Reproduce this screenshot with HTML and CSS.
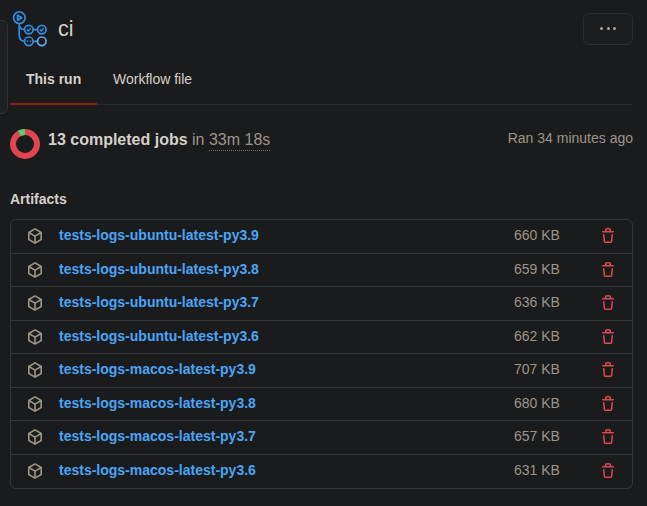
FILE: index.html
```html
<!DOCTYPE html>
<html lang="en">
<head>
<meta charset="utf-8">
<title>ci</title>
<link rel="stylesheet" href="styles.css">
</head>
<body>
<svg class="defs" width="0" height="0">
  <symbol id="package" viewBox="0 0 16 16"><path fill="none" stroke="currentColor" stroke-width="1.6" stroke-linejoin="round" d="M8 .9 14.2 4.5v7L8 15.1 1.8 11.5v-7zM1.8 4.5 8 8.1l6.2-3.6M8 8.1v7"/></symbol>
  <symbol id="trash" viewBox="0 0 16 16"><path fill="currentColor" fill-rule="evenodd" d="M6.5 1.75a.25.25 0 01.25-.25h2.5a.25.25 0 01.25.25V3h-3V1.75zm4.5 0V3h2.25a.75.75 0 010 1.5H2.75a.75.75 0 010-1.5H5V1.75C5 .784 5.784 0 6.75 0h2.5C10.216 0 11 .784 11 1.75zM4.496 6.675a.75.75 0 10-1.492.15l.66 6.6A1.75 1.75 0 005.405 15h5.19c.9 0 1.652-.681 1.741-1.576l.66-6.6a.75.75 0 00-1.492-.149l-.66 6.6a.25.25 0 01-.249.225h-5.19a.25.25 0 01-.249-.225l-.66-6.6z"/></symbol>
</svg>
<div class="side-panel"></div>
<main class="page">
  <header class="header">
    <svg class="logo" width="36" height="38" viewBox="0 0 36 38" fill="none" stroke="#318de2" stroke-width="1.7">
      <circle cx="7.3" cy="7.7" r="5.8"/>
      <path d="M5.6 5.1v5.2l4-2.6z" stroke-linejoin="round"/>
      <path d="M7.2 13.5v10.8q0 7 5.3 7M7.2 14.5q.4 5 5.3 5M21.1 19.6h4.4M21.1 31.3h4.4"/>
      <circle cx="16.8" cy="19.6" r="4.3"/>
      <circle cx="29.8" cy="19.6" r="4.3"/>
      <circle cx="16.8" cy="31.3" r="4.3"/>
      <circle cx="29.8" cy="31.3" r="4.3" stroke="#66acef"/>
      <path stroke-width="1.5" d="m14.8 19.6 1.4 1.4 2.7-2.7M27.8 19.6l1.4 1.4 2.7-2.7M14.7 31.3h1.5M17.6 31.3h1.5"/>
    </svg>
    <h1 class="title">ci</h1>
    <button class="more" aria-label="More"><i></i><i></i><i></i></button>
  </header>
  <nav class="tabs">
    <a class="tab active">This run</a>
    <a class="tab">Workflow file</a>
  </nav>
  <section class="summary">
    <svg class="donut" width="30" height="30" viewBox="0 0 30 30" fill="none" stroke-width="6">
      <circle cx="15" cy="15" r="12" stroke="#df4650"/>
      <path stroke="#4fd56a" d="M9.4 4.4A12 12 0 0 1 15 3"/>
      <path stroke="#b83942" stroke-width=".6" d="m5 25 3.8-3.8"/>
    </svg>
    <p class="jobs"><strong>13 completed jobs</strong> <span>in</span> <span class="duration">33m 18s</span></p>
    <p class="ran">Ran 34 minutes ago</p>
  </section>
  <h2 class="heading">Artifacts</h2>
  <ul class="artifacts">
    <li><svg class="package"><use href="#package"/></svg><a>tests-logs-ubuntu-latest-py3.9</a><span class="size">660 KB</span><svg class="trash"><use href="#trash"/></svg></li>
    <li><svg class="package"><use href="#package"/></svg><a>tests-logs-ubuntu-latest-py3.8</a><span class="size">659 KB</span><svg class="trash"><use href="#trash"/></svg></li>
    <li><svg class="package"><use href="#package"/></svg><a>tests-logs-ubuntu-latest-py3.7</a><span class="size">636 KB</span><svg class="trash"><use href="#trash"/></svg></li>
    <li><svg class="package"><use href="#package"/></svg><a>tests-logs-ubuntu-latest-py3.6</a><span class="size">662 KB</span><svg class="trash"><use href="#trash"/></svg></li>
    <li><svg class="package"><use href="#package"/></svg><a>tests-logs-macos-latest-py3.9</a><span class="size">707 KB</span><svg class="trash"><use href="#trash"/></svg></li>
    <li><svg class="package"><use href="#package"/></svg><a>tests-logs-macos-latest-py3.8</a><span class="size">680 KB</span><svg class="trash"><use href="#trash"/></svg></li>
    <li><svg class="package"><use href="#package"/></svg><a>tests-logs-macos-latest-py3.7</a><span class="size">657 KB</span><svg class="trash"><use href="#trash"/></svg></li>
    <li><svg class="package"><use href="#package"/></svg><a>tests-logs-macos-latest-py3.6</a><span class="size">631 KB</span><svg class="trash"><use href="#trash"/></svg></li>
  </ul>
</main>
</body>
</html>
```
FILE: styles.css
```css
* { box-sizing: border-box; }
body {
  margin: 0;
  height: 506px;
  overflow: hidden;
  background: #1a1b1d;
  color: #d5d1ca;
  font: 14px/20px "Liberation Sans", Arial, sans-serif;
}
h1, h2, p, ul { margin: 0; padding: 0; }
.defs, .side-panel { position: absolute; }
.side-panel {
  left: -10px;
  top: 20px;
  width: 18px;
  height: 94px;
  background: #1f2022;
  border: 1px solid #303336;
  border-radius: 6px;
}
.page { padding: 10px 14px 0 10px; }
.header { display: flex; height: 54px; }
.logo { margin-left: 2px; }
.title { margin: 4px 0 0 10px; font-size: 21.5px; line-height: 30px; font-weight: 400; }
.more {
  display: flex;
  align-items: center;
  justify-content: center;
  gap: 3.5px;
  width: 50px;
  height: 32px;
  margin: 3px 0 0 auto;
  padding: 0;
  background: #1b1d1f;
  border: 1px solid #2b2d2f;
  border-radius: 6px;
}
.more i { width: 3px; height: 3px; margin-bottom: 1px; border-radius: 50%; background: #aaa294; }
.tabs { display: flex; height: 41px; border-bottom: 1px solid #27292b; }
.tab { height: 41px; padding: 5px 16px 0; white-space: nowrap; }
.active { width: 87px; font-weight: 700; border-bottom: 2px solid #931c0a; }
.summary { display: flex; height: 84px; padding-top: 24px; color: #9d9588; }
.jobs { margin-left: 8px; font-size: 16px; line-height: 22px; }
.jobs strong { color: #d5d1ca; }
.duration { display: inline-block; height: 22px; border-bottom: 1px dotted #777168; }
.ran { margin-left: auto; line-height: 19px; }
.heading { font-size: 14px; line-height: 20px; }
.artifacts {
  margin-top: 10px;
  height: 270px;
  display: grid;
  grid-template-rows: 33px repeat(3, 33px 34px) 34px;
  border: 1px solid #35383b;
  border-radius: 6px;
  list-style: none;
}
.artifacts li {
  display: grid;
  grid-template-columns: 16px 1fr 86px 16px;
  align-items: start;
  padding: 5px 16px 0;
}
.artifacts li + li { border-top: 1px solid #35383b; }
.artifacts a { margin-left: 16px; font-weight: 700; color: #4ba5f5; }
.artifacts svg { width: 16px; height: 16px; margin-top: 3px; }
.package { color: #9d9588; }
.trash { color: #df4650; }
.size { color: #9d9588; }
```
